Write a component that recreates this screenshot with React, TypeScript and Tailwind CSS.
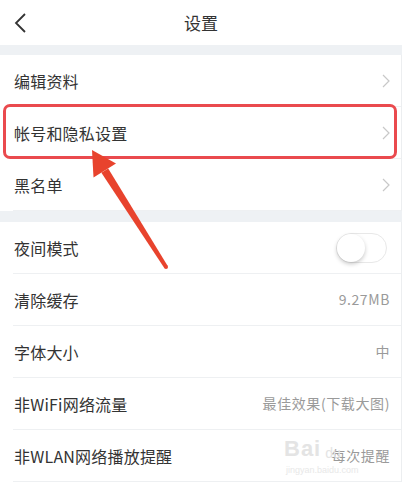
import { ReactNode } from "react";

const font = { fontFamily: '"Noto Sans CJK SC", "Noto Sans", sans-serif' };

function Chevron() {
  return (
    <svg width="8" height="14" viewBox="0 0 8 14" fill="none">
      <path d="M1 1l6 6-6 6" stroke="#c8c8c8" strokeWidth="1.2" />
    </svg>
  );
}

function Row({ label, right }: { label: string; right?: ReactNode }) {
  return (
    <div className="h-[52px] pl-[13px]">
      <div className="h-full flex items-center justify-between border-b border-[#eef0f2] pr-[11px]">
        <span className="text-[16px] text-[#333] pl-px tracking-[0.2px]">{label}</span>
        {right}
      </div>
    </div>
  );
}

function Value({ text }: { text: string }) {
  return <span className="text-[14px] text-[#9a9a9a] tracking-[0.6px]">{text}</span>;
}

export default function App() {
  return (
    <div className="relative w-[402px] h-[490px] bg-white overflow-hidden" style={font}>
      <div className="h-[45px] relative flex items-center justify-center">
        <svg className="absolute left-[13px] top-[13px]" width="14" height="20" viewBox="0 0 14 20" fill="none">
          <path d="M12 1L3 10l9 9" stroke="#333" strokeWidth="1.8" />
        </svg>
        <span className="text-[17px] text-[#333]">设置</span>
      </div>
      <div className="h-[10px] bg-[#eef1f4]" />
      <div className="border-r border-[#eceef0]">
        <Row label="编辑资料" right={<Chevron />} />
        <Row label="帐号和隐私设置" right={<Chevron />} />
        <Row label="黑名单" right={<Chevron />} />
      </div>
      <div className="h-[11px] bg-[#eef1f4]" />
      <div className="border-r border-[#eceef0]">
        <Row
          label="夜间模式"
          right={
            <div className="w-[51px] h-[30px] mr-[3px] rounded-full border border-[#e8e8e8] bg-white flex items-center">
              <div className="w-[28px] h-[28px] rounded-full bg-white shadow-[0_2px_4px_rgba(0,0,0,0.22)]" />
            </div>
          }
        />
        <Row label="清除缓存" right={<Value text="9.27MB" />} />
        <Row label="字体大小" right={<Value text="中" />} />
        <Row label="非WiFi网络流量" right={<Value text="最佳效果(下载大图)" />} />
        <Row label="非WLAN网络播放提醒" right={<Value text="每次提醒" />} />
      </div>

      {/* highlight box */}
      <div className="absolute left-[3px] top-[104px] w-[394px] h-[55px] border-[3.5px] border-[#ea4a4e] rounded-[7px]" />

      {/* arrow */}
      <svg className="absolute left-0 top-0" width="402" height="490" viewBox="0 0 402 490">
        <polygon points="92,150 116,163.5 93.5,177.5" fill="#e8432d" />
        <polygon points="108.2,168.6 101.4,172.8 164.3,268.1 167.7,265.9" fill="#e8432d" />
        <circle cx="166" cy="267" r="2" fill="#e8432d" />
      </svg>

      {/* watermark */}
      <div className="absolute left-[284px] top-[438px] flex items-end text-[#e4e4e4] leading-none">
        <span className="text-[22px] font-bold tracking-[1px]" style={{ fontFamily: '"Liberation Sans", sans-serif' }}>
          Bai
        </span>
        <span className="text-[14px] ml-[4px]" style={{ fontFamily: '"Liberation Sans", sans-serif' }}>
          du
        </span>
      </div>
      <div
        className="absolute left-[286px] top-[464px] text-[9px] text-[#e8e8e8]"
        style={{ fontFamily: '"Liberation Sans", sans-serif' }}
      >
        jingyan.baidu.com
      </div>
    </div>
  );
}
